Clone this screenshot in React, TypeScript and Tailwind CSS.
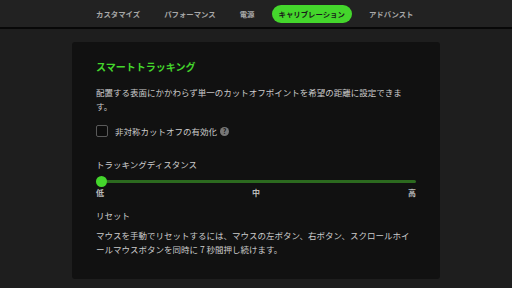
import React from "react";

const font = { fontFamily: '"Noto Sans CJK JP", "Noto Sans", sans-serif' };

export default function App() {
  const tabs = ["カスタマイズ", "パフォーマンス", "電源", "キャリブレーション", "アドバンスト"];
  return (
    <div className="w-[512px] h-[288px] bg-[#1e1e1e] flex flex-col overflow-hidden" style={font}>
      <div className="h-[27px] bg-[#222222] flex items-center pl-[96px] gap-[24px] text-[7.4px] text-[#a8a8a8] font-bold">
        {tabs.map((t) =>
          t === "キャリブレーション" ? (
            <div key={t} className="h-[18px] -mx-[7px] px-[7px] rounded-full bg-[#44d62c] text-[#1a1a1a] flex items-center">
              {t}
            </div>
          ) : (
            <div key={t}>{t}</div>
          )
        )}
      </div>
      <div className="h-[2px] bg-[#080808]" />
      <div className="flex-1 pt-[13px] pl-[72px]">
        <div className="w-[368px] h-[237px] bg-[#111111] rounded-[3px] pl-[24px] pr-[24px] pt-[18px] text-[#cccccc]">
          <div className="text-[10px] text-[#44d62c] leading-[14px] font-bold">スマートトラッキング</div>
          <div className="mt-[11px] text-[8.5px] leading-[14px] w-[312px]">
            配置する表面にかかわらず単一のカットオフポイントを希望の距離に設定できます。
          </div>
          <div className="mt-[11px] flex items-center">
            <div className="w-[12px] h-[12px] border border-[#5a5a5a] rounded-[2px] bg-[#0d0d0d]" />
            <span className="ml-[7px] text-[8.5px] leading-[14px]">非対称カットオフの有効化</span>
            <span className="ml-[3px] w-[9px] h-[9px] rounded-full bg-[#777] text-[#111] text-[7px] leading-[9px] font-bold flex items-center justify-center">?</span>
          </div>
          <div className="mt-[19px] text-[8.5px] leading-[14px]">トラッキングディスタンス</div>
          <div className="mt-[5px] relative h-[11px] w-[320px] flex items-center">
            <div className="w-full h-[3px] rounded-full bg-[#2c6a1f]" />
            <div className="absolute left-0 top-0 w-[11px] h-[11px] rounded-full bg-[#44d62c]" />
          </div>
          <div className="w-[320px] flex justify-between text-[8px] leading-[12px] mt-[0px] font-bold text-[#bbbbbb]">
            <span>低</span>
            <span>中</span>
            <span>高</span>
          </div>
          <div className="mt-[9px] text-[8.5px] leading-[14px]">リセット</div>
          <div className="mt-[6px] text-[8.5px] leading-[14px] w-[320px]">
            マウスを手動でリセットするには、マウスの左ボタン、右ボタン、スクロールホイールマウスボタンを同時に 7 秒間押し続けます。
          </div>
        </div>
      </div>
    </div>
  );
}
